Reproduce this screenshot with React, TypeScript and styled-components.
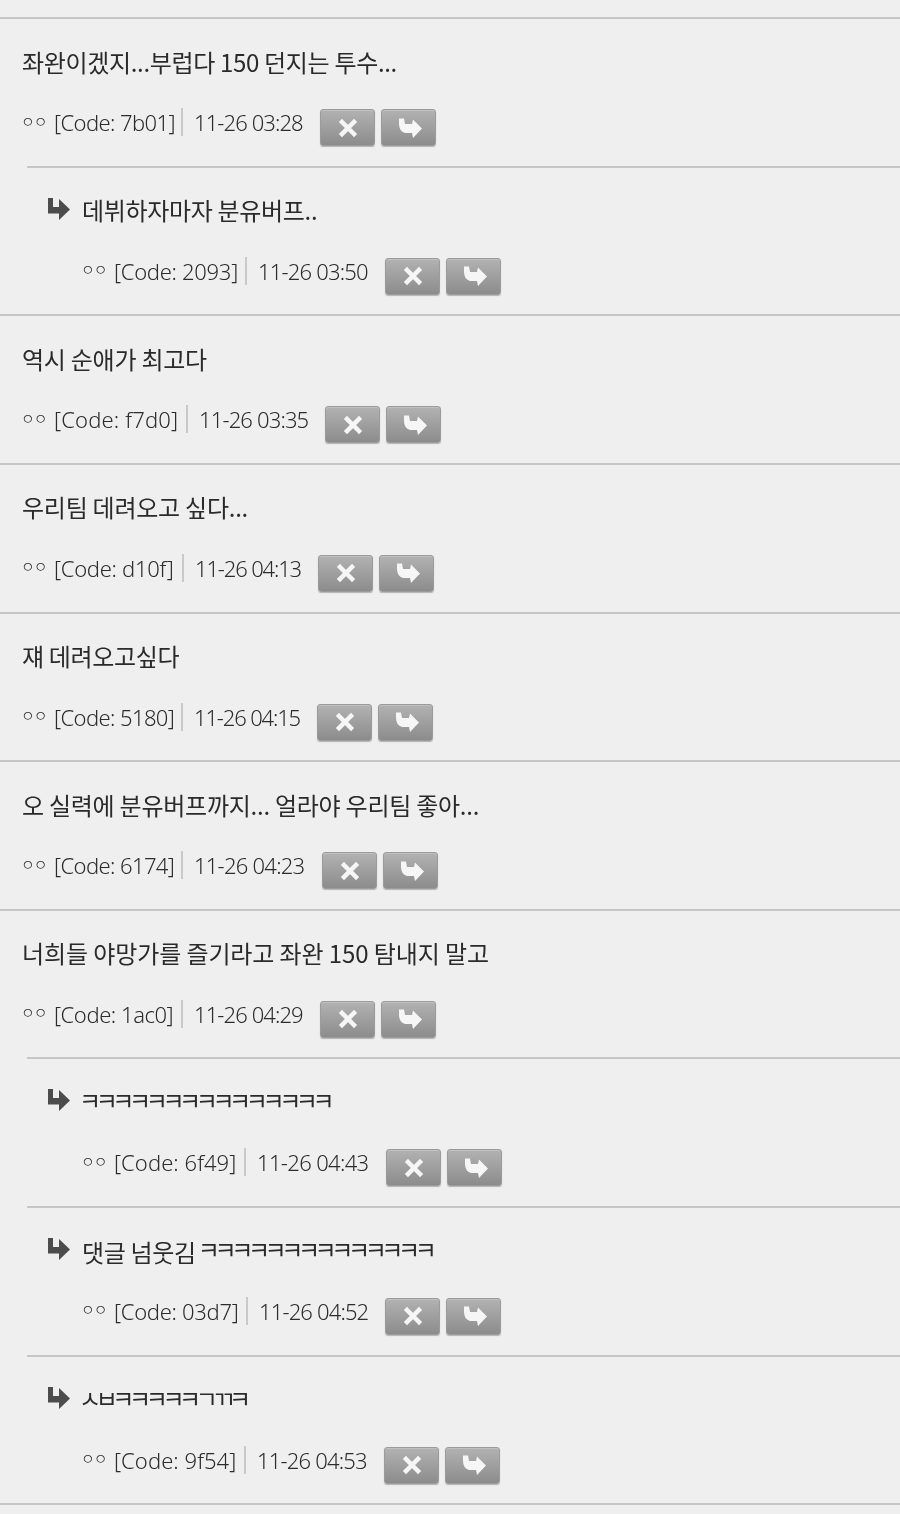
import React from 'react';
import styled, { createGlobalStyle } from 'styled-components';

const GlobalStyle = createGlobalStyle`
  html, body { margin: 0; padding: 0; background: #efefef; }
  body { font-family: "Noto Sans CJK KR", "Noto Sans", sans-serif; color: #333; }
`;

interface CommentData {
  text: string;
  code: string;
  time: string;
  reply?: boolean;
  codeWidth: number;
  timeWidth: number;
  textSpacing: number;
  codeSpacing: number;
  timeSpacing: number;
}

const comments: CommentData[] = [
  { text: '좌완이겠지...부럽다 150 던지는 투수...', code: '7b01', time: '11-26 03:28', codeWidth: 129, timeWidth: 108, textSpacing: -0.33, codeSpacing: -0.6, timeSpacing: -0.9 },
  { text: '데뷔하자마자 분유버프..', code: '2093', time: '11-26 03:50', reply: true, codeWidth: 133, timeWidth: 109, textSpacing: -0.33, codeSpacing: -0.3, timeSpacing: -0.8 },
  { text: '역시 순애가 최고다', code: 'f7d0', time: '11-26 03:35', codeWidth: 134, timeWidth: 108, textSpacing: -0.25, codeSpacing: 0.15, timeSpacing: -0.85 },
  { text: '우리팀 데려오고 싶다...', code: 'd10f', time: '11-26 04:13', codeWidth: 130, timeWidth: 105, textSpacing: -0.25, codeSpacing: -0.3, timeSpacing: -1.15 },
  { text: '쟤 데려오고싶다', code: '5180', time: '11-26 04:15', codeWidth: 129, timeWidth: 105, textSpacing: -0.35, codeSpacing: -0.6, timeSpacing: -1.15 },
  { text: '오 실력에 분유버프까지... 얼라야 우리팀 좋아...', code: '6174', time: '11-26 04:23', codeWidth: 129, timeWidth: 110, textSpacing: -0.25, codeSpacing: -0.6, timeSpacing: -0.75 },
  { text: '너희들 야망가를 즐기라고 좌완 150 탐내지 말고', code: '1ac0', time: '11-26 04:29', codeWidth: 129, timeWidth: 108, textSpacing: -0.1, codeSpacing: -0.45, timeSpacing: -0.9 },
  { text: 'ㅋㅋㅋㅋㅋㅋㅋㅋㅋㅋㅋㅋㅋㅋㅋ', code: '6f49', time: '11-26 04:43', reply: true, codeWidth: 132, timeWidth: 111, textSpacing: -1, codeSpacing: 0.05, timeSpacing: -0.65 },
  { text: '댓글 넘웃김 ㅋㅋㅋㅋㅋㅋㅋㅋㅋㅋㅋㅋㅋㅋ', code: '03d7', time: '11-26 04:52', reply: true, codeWidth: 134, timeWidth: 108, textSpacing: -0.33, codeSpacing: -0.3, timeSpacing: -0.85 },
  { text: 'ㅅㅂㅋㅋㅋㅋㅋㄱㄲㅋ', code: '9f54', time: '11-26 04:53', reply: true, codeWidth: 132, timeWidth: 109, textSpacing: -1, codeSpacing: 0.05, timeSpacing: -0.8 },
];

const Page = styled.div`
  width: 900px;
  height: 1514px;
  overflow: hidden;
  padding-top: 17.2px;
  box-sizing: border-box;
  background: #efefef;
  filter: grayscale(1);
`;

const Row = styled.div<{ $reply?: boolean }>`
  height: 148.6px;
  box-sizing: border-box;
  margin-left: ${(p) => (p.$reply ? 27 : 0)}px;
  padding-left: ${(p) => (p.$reply ? 20 : 22)}px;
  border-top: 2.5px solid #c6c6c6;
`;

const EndRule = styled.div`
  border-top: 2.5px solid #c6c6c6;
`;

const TextLine = styled.div`
  display: flex;
  align-items: center;
  height: 84px;
`;

const ReplyMark = styled.svg`
  width: 24px;
  height: 24px;
  margin-right: 11px;
  flex: none;
  filter: blur(0.4px);
`;

const Text = styled.span<{ $spacing: number }>`
  font-size: 24px;
  letter-spacing: ${(p) => p.$spacing}px;
  color: #2a2a2a;
  white-space: nowrap;
`;

const Jamo = styled.span`
  letter-spacing: -5.4px;
  vertical-align: 3px;
  &:first-child {
    margin-left: -3px;
  }
`;

const Meta = styled.div<{ $reply?: boolean }>`
  display: flex;
  align-items: flex-start;
  padding-left: ${(p) => (p.$reply ? 35 : 0)}px;
  height: 40px;
`;

const Info = styled.div`
  display: flex;
  align-items: center;
  height: 38px;
  font-family: "Noto Sans", "Noto Sans CJK KR", sans-serif;
  font-size: 22px;
  font-weight: 300;
  color: #2c2c2c;
  white-space: nowrap;
`;

const Author = styled.span`
  font-size: 15px;
  width: 33px;
  margin-left: -1px;
  margin-bottom: 4px;
  letter-spacing: -1px;
`;

const Code = styled.span<{ $width: number; $spacing: number }>`
  width: ${(p) => p.$width}px;
  box-sizing: border-box;
  height: 28px;
  line-height: 28px;
  letter-spacing: ${(p) => p.$spacing}px;
  border-right: 2px solid #c9c9c9;
`;

const Time = styled.span<{ $width: number; $spacing: number }>`
  width: ${(p) => p.$width}px;
  margin-left: 11px;
  letter-spacing: ${(p) => p.$spacing}px;
`;

const Buttons = styled.div`
  display: flex;
  gap: 6px;
  margin-left: 18px;
  margin-top: 6px;
`;

const IconButton = styled.button`
  width: 55px;
  height: 37px;
  padding: 0;
  display: flex;
  align-items: center;
  justify-content: center;
  border: 1px solid #9b9b9b;
  border-radius: 3px;
  background: linear-gradient(#b2b2b2, #8c8c8c);
  box-shadow: inset 0 1px 0 #c0c0c0, 0 1px 1px rgba(0, 0, 0, 0.25);
  svg {
    filter: blur(0.5px);
  }
`;

const XIcon = () => (
  <svg width="26" height="24" viewBox="0 0 26 24">
    <path d="M7 6 L19 18 M19 6 L7 18" stroke="#f6f6f6" strokeWidth="4.5" strokeLinecap="square" fill="none" />
  </svg>
);

const ArrowIcon = () => (
  <svg width="28" height="24" viewBox="0 0 28 24">
    <path d="M4 2.5 L9 2.5 L10 8 L17 8 L18 3.5 L27 12.5 L18 22 L17 17 L10 17 Q4 15 4 8 Z" fill="#f6f6f6" />
  </svg>
);

// ㅋ runs sit much tighter than the syllables around them
const renderText = (text: string) =>
  text.split(/([ㄱ-ㅎ]+)/).filter(Boolean).map((part, i) =>
    /^[ㄱ-ㅎ]/.test(part) ? <Jamo key={i}>{part}</Jamo> : part
  );

const Comment: React.FC<{ data: CommentData }> = ({ data }) => (
  <Row $reply={data.reply}>
    <TextLine>
      {data.reply && (
        <ReplyMark viewBox="0 0 24 24">
          <path d="M1 0 L6 0 L6 9 L12 9 L12 1 L23 11.5 L12 22 L12 15.5 L1 15.5 Z" fill="#4c4c4c" />
        </ReplyMark>
      )}
      <Text $spacing={data.textSpacing}>{renderText(data.text)}</Text>
    </TextLine>
    <Meta $reply={data.reply}>
      <Info>
        <Author>ㅇㅇ</Author>
        <Code $width={data.codeWidth} $spacing={data.codeSpacing}>[Code: {data.code}]</Code>
        <Time $width={data.timeWidth} $spacing={data.timeSpacing}>{data.time}</Time>
      </Info>
      <Buttons>
        <IconButton type="button"><XIcon /></IconButton>
        <IconButton type="button"><ArrowIcon /></IconButton>
      </Buttons>
    </Meta>
  </Row>
);

export default function App() {
  return (
    <Page>
      <GlobalStyle />
      {comments.map((c) => (
        <Comment key={c.code} data={c} />
      ))}
      <EndRule />
    </Page>
  );
}
